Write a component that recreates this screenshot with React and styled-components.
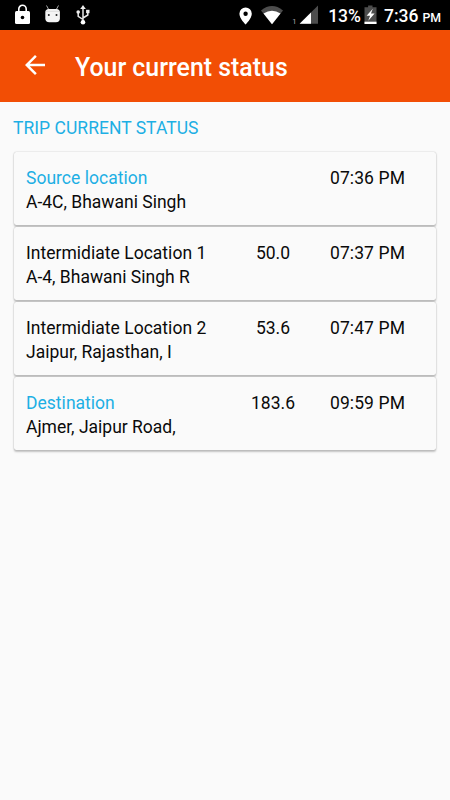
import React from "react";
import styled, { createGlobalStyle } from "styled-components";

const GlobalStyle = createGlobalStyle`
  * { box-sizing: border-box; }
  body {
    margin: 0;
    background: #fafafa;
    font-family: Roboto, "Noto Sans", sans-serif;
  }
`;

const Screen = styled.div`
  width: 450px;
  height: 800px;
  overflow: hidden;
  background: #fafafa;
`;

const StatusBar = styled.header`
  display: flex;
  justify-content: space-between;
  height: 30px;
  background: #000;
`;

const StatusIcons = styled.svg`
  display: block;
  height: 30px;
  width: ${(p) => p.$width}px;
  flex: none;
`;

const StatusGroup = styled.div`
  display: flex;
  height: 30px;
  padding-right: 9px;
`;

const StatusText = styled.span`
  color: #fff;
  font-size: 17.5px;
  font-weight: 500;
  line-height: 33px;
  white-space: nowrap;
`;

const Meridiem = styled.span`
  margin-left: 4px;
  font-size: 12.3px;
`;

const AppBar = styled.div`
  display: flex;
  align-items: center;
  height: 72px;
  padding-left: 20px;
  background: #f24e05;
`;

const BackButton = styled.button`
  display: flex;
  width: 30px;
  height: 30px;
  margin: 0 25px 2px 0;
  padding: 0;
  border: 0;
  background: none;
`;

const Title = styled.h1`
  margin: 4px 0 0;
  color: #fff;
  font-size: 24.9px;
  font-weight: 500;
  line-height: 30px;
`;

const Content = styled.main`
  padding: 14px 13px 0;
`;

const SectionTitle = styled.h2`
  margin: 0 0 12px;
  color: #1dafe4;
  font-size: 17.5px;
  font-weight: 400;
  line-height: 24px;
  letter-spacing: 0.03px;
`;

const StopList = styled.div`
  display: flex;
  flex-direction: column;
  gap: 2px;
  padding: 0 1px 0 0.5px;
`;

const StopCard = styled.article`
  display: grid;
  grid-template-columns: 205px 84px 105px;
  height: 73px;
  padding: 13.5px 0 0 12.5px;
  border-radius: 2.5px;
  background: #fafafa;
  box-shadow: 0 0 1.5px rgba(0, 0, 0, 0.24), 0 1.2px 2px rgba(0, 0, 0, 0.22);
  color: #0a0a0a;
  font-size: 17.5px;
  line-height: 24px;
  white-space: nowrap;
`;

const StopName = styled.div`
  color: ${(p) => (p.$accent ? "#1dafe4" : "inherit")};
  letter-spacing: 0.02px;
`;

const Distance = styled.div`
  text-align: center;
`;

const Time = styled.div`
  text-align: center;
  letter-spacing: 0.1px;
`;

const stops = [
  { name: "Source location", place: "A-4C, Bhawani Singh", distance: "", time: "07:36 PM", accent: true },
  { name: "Intermidiate Location 1", place: "A-4, Bhawani Singh R", distance: "50.0", time: "07:37 PM" },
  { name: "Intermidiate Location 2", place: "Jaipur, Rajasthan, I", distance: "53.6", time: "07:47 PM" },
  { name: "Destination", place: "Ajmer, Jaipur Road,", distance: "183.6", time: "09:59 PM", accent: true },
];

const NotificationIcons = () => (
  <StatusIcons $width={100} viewBox="0 0 100 30" fill="none">
    <path d="M18.8 12V9a3.7 3.7 0 0 1 7.4 0v3" stroke="#fff" strokeWidth="1.6" />
    <rect x="15" y="11" width="15" height="13" rx="1.5" fill="#fff" />
    <circle cx="22.5" cy="17.5" r="1.8" fill="#000" />
    <path d="M46.5 5.5l2.2 4M58.5 5.5l-2.2 4" stroke="#aaa" strokeWidth="1" />
    <path d="M45.3 12.5q0-3.5 3.5-3.5h7.6q3.5 0 3.5 3.5v5.8q0 4-4 4h-6.6q-4 0-4-4z" fill="#f4f4f4" />
    <path d="M45.5 11.3h14.2" stroke="#ccc" strokeWidth=".6" />
    <circle cx="48.8" cy="15" r="1" fill="#222" />
    <circle cx="56.5" cy="15" r="1" fill="#222" />
    <path d="M83 7v15M83 19.5l-4.8-3.2v-3.5M83 18l4.8-3v-3" stroke="#e8e8e8" strokeWidth="1.5" />
    <path d="M83 5l2.8 4h-5.6z" fill="#eee" />
    <circle cx="78.2" cy="12" r="1.8" fill="#eee" />
    <rect x="86.1" y="9.8" width="3.4" height="3.4" fill="#eee" />
    <circle cx="83" cy="22.3" r="2.3" fill="#fff" />
  </StatusIcons>
);

const ConnectivityIcons = () => (
  <StatusIcons $width={91} viewBox="237 0 91 30" fill="none">
    <path
      d="M245.6 7.5a6.2 6.2 0 0 0-6.2 6.2c0 4.7 6.2 10.8 6.2 10.8s6.2-6.1 6.2-10.8a6.2 6.2 0 0 0-6.2-6.2zm0 4a2.2 2.2 0 1 1 0 4.4 2.2 2.2 0 0 1 0-4.4z"
      fill="#fff"
    />
    <path d="M272 24.2L261 10.4q11-8.8 22 0z" fill="#4d4d4d" />
    <path d="M272 24.2L263.5 13.5q8.5-5.4 17 0z" fill="#fff" />
    <text x="292.3" y="24" fill="#aaa" fontSize="7.5">1</text>
    <path d="M318 5.5V23.7H299.6z" fill="#4d4d4d" />
    <path d="M311 12.4V23.7H299.6z" fill="#fff" />
  </StatusIcons>
);

const BatteryIcon = () => (
  <StatusIcons $width={23} viewBox="360.5 0 23 30">
    <path d="M364 7.3h3.6V5.5h4.4v1.8h4V24h-12z" fill="#4d4d4d" />
    <path d="M364 21.7h12V24h-12z" fill="#fff" />
    <path d="M372.3 8.8l-6.2 7h3.5l-1.8 5 6.3-7.3h-3.6z" fill="#fff" />
  </StatusIcons>
);

export default function App() {
  return (
    <Screen>
      <GlobalStyle />
      <StatusBar>
        <NotificationIcons />
        <StatusGroup>
          <ConnectivityIcons />
          <StatusText>13%</StatusText>
          <BatteryIcon />
          <StatusText>
            7:36<Meridiem>PM</Meridiem>
          </StatusText>
        </StatusGroup>
      </StatusBar>
      <AppBar>
        <BackButton aria-label="Back">
          <svg width="30" height="30" viewBox="0 0 24 24" fill="#fff">
            <path d="M20 11H7.83l5.59-5.59L12 4l-8 8 8 8 1.41-1.41L7.83 13H20v-2z" />
          </svg>
        </BackButton>
        <Title>Your current status</Title>
      </AppBar>
      <Content>
        <SectionTitle>TRIP CURRENT STATUS</SectionTitle>
        <StopList>
          {stops.map((stop) => (
            <StopCard key={stop.name}>
              <div>
                <StopName $accent={stop.accent}>{stop.name}</StopName>
                <div>{stop.place}</div>
              </div>
              <Distance>{stop.distance}</Distance>
              <Time>{stop.time}</Time>
            </StopCard>
          ))}
        </StopList>
      </Content>
    </Screen>
  );
}
